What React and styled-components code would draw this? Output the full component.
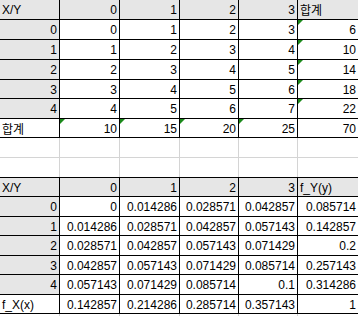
import React from 'react';
import styled, { createGlobalStyle } from 'styled-components';

const GlobalStyle = createGlobalStyle`
  body {
    margin: 0;
    background: #fff;
    font-family: "Liberation Sans", Arial, "Noto Sans CJK KR", sans-serif;
  }
`;

const COLS = '59px 59px 59px 58px 58px 60px';

const Sheet = styled.div`
  width: 358px;
  height: 316px;
  overflow: hidden;
  display: flex;
  flex-direction: column;
  background: #fff;
`;

const Grid = styled.div`
  display: grid;
  grid-template-columns: ${COLS};
  grid-template-rows: ${(p) => p.$rows.map((r) => `${r}px`).join(' ')};
  gap: 1px;
  background: ${(p) => (p.$light ? '#d4d4d4' : '#000')};
  padding-top: ${(p) => (p.$top ? '1px' : '0')};
  padding-bottom: ${(p) => (p.$bottom ? '1px' : '0')};
  flex-shrink: 0;
`;

const Cell = styled.div`
  position: relative;
  display: flex;
  align-items: center;
  justify-content: ${(p) => (p.$left ? 'flex-start' : 'flex-end')};
  padding: 1px 2px 0 2px;
  background: ${(p) => (p.$head ? '#e6e6e6' : '#fff')};
  color: #000;
  font-size: 12px;
  line-height: 1;
  white-space: nowrap;
  overflow: hidden;

  ${(p) =>
    p.$flag &&
    `
    &::before {
      content: '';
      position: absolute;
      left: 0;
      top: 0;
      border-top: 5px solid #1b8a1b;
      border-right: 5px solid transparent;
    }
  `}
`;

const Label = styled.span`
  font-family: "Noto Sans CJK KR", "Liberation Sans", sans-serif;
  font-size: 12px;
`;

const fmt = (v) => String(Number(v.toFixed(6)));

const ys = [0, 1, 2, 3];
const xs = [0, 1, 2, 3, 4];

const SumTable = () => {
  const colSums = ys.map((y) => xs.reduce((s, x) => s + x + y, 0));
  const total = colSums.reduce((a, b) => a + b, 0);
  return (
    <Grid $rows={[19, 19, 19, 19, 18, 19, 18]} $bottom>
      <Cell $head $left>X/Y</Cell>
      {ys.map((y) => (
        <Cell $head key={y}>{y}</Cell>
      ))}
      <Cell $head $left><Label>합계</Label></Cell>
      {xs.map((x) => (
        <React.Fragment key={x}>
          <Cell $head>{x}</Cell>
          {ys.map((y) => (
            <Cell key={y}>{x + y}</Cell>
          ))}
          <Cell $flag>{ys.reduce((s, y) => s + x + y, 0)}</Cell>
        </React.Fragment>
      ))}
      <Cell $left><Label>합계</Label></Cell>
      {colSums.map((s, i) => (
        <Cell $flag key={i}>{s}</Cell>
      ))}
      <Cell>{total}</Cell>
    </Grid>
  );
};

const ProbTable = () => {
  const p = (x, y) => (x + y) / 70;
  return (
    <Grid $rows={[18, 19, 18, 19, 18, 19, 18]} $top $bottom>
      <Cell $head $left>X/Y</Cell>
      {ys.map((y) => (
        <Cell $head key={y}>{y}</Cell>
      ))}
      <Cell $head $left>f_Y(y)</Cell>
      {xs.map((x) => (
        <React.Fragment key={x}>
          <Cell $head>{x}</Cell>
          {ys.map((y) => (
            <Cell key={y}>{fmt(p(x, y))}</Cell>
          ))}
          <Cell>{fmt(ys.reduce((s, y) => s + p(x, y), 0))}</Cell>
        </React.Fragment>
      ))}
      <Cell $left>f_X(x)</Cell>
      {ys.map((y) => (
        <Cell key={y}>{fmt(xs.reduce((s, x) => s + p(x, y), 0))}</Cell>
      ))}
      <Cell>1</Cell>
    </Grid>
  );
};

const BlankRows = ({ count }) => (
  <Grid $rows={Array(count).fill(19)} $light>
    {Array.from({ length: count * 6 }, (_, i) => (
      <Cell key={i} />
    ))}
  </Grid>
);

export default function App() {
  return (
    <>
      <GlobalStyle />
      <Sheet>
        <SumTable />
        <BlankRows count={2} />
        <ProbTable />
        <BlankRows count={1} />
      </Sheet>
    </>
  );
}
